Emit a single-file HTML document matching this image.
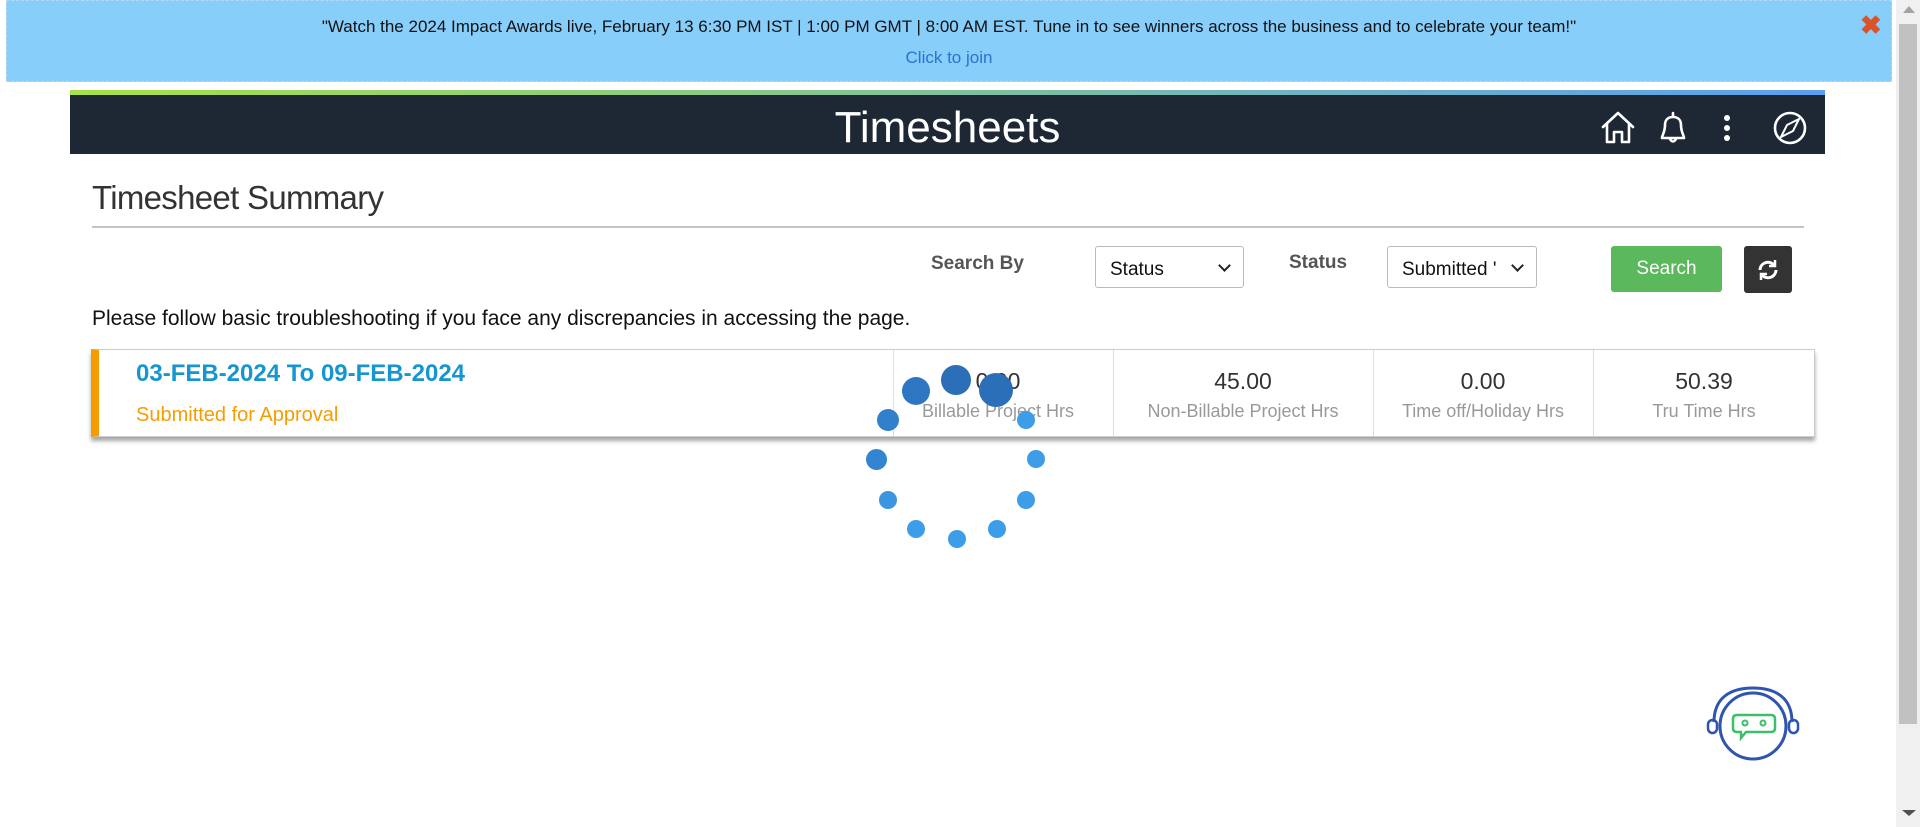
<!DOCTYPE html>
<html><head><meta charset="utf-8"><style>
*{margin:0;padding:0;box-sizing:border-box}
body{width:1920px;height:827px;overflow:hidden;background:#fff;font-family:"Liberation Sans",Arial,sans-serif;position:relative}
.a{position:absolute}
.banner{left:6px;top:0;width:1886px;height:82px;background:#87cefa;border:1px dashed #b9d9f0}
.sel{background:#fff;border:1px solid #bbb;border-radius:3px;font-size:19px;color:#111;padding:12px 0 0 14px;height:42px}
.sel:after{content:"";position:absolute;right:14px;top:14px;width:7px;height:7px;border-right:2px solid #222;border-bottom:2px solid #222;transform:rotate(45deg)}
.val{font-size:23px;color:#333;text-align:center}
.lbl{font-size:18px;color:#999;text-align:center}
.dot{position:absolute;border-radius:50%}
</style></head><body>
<div class="a banner"></div>
<div class="a" style="left:6px;width:1886px;top:17px;text-align:center;font-size:17px;color:#111">"Watch the 2024 Impact Awards live, February 13 6:30 PM IST | 1:00 PM GMT | 8:00 AM EST. Tune in to see winners across the business and to celebrate your team!"</div>
<div class="a" style="left:6px;width:1886px;top:48px;text-align:center;font-size:17px;color:#2a73d0">Click to join</div>
<div class="a" style="left:1860px;top:12px;font-size:26px;font-weight:bold;color:#d9542a;line-height:1">✖</div>
<div class="a" style="left:1896px;top:0;width:24px;height:827px;background:#f0f0f0"></div>
<div class="a" style="left:1899px;top:24px;width:18px;height:700px;background:#c1c1c1"></div>
<div class="a" style="left:1903px;top:6px;border:6px solid transparent;border-bottom:7px solid #a3a3a3;border-top:0"></div>
<div class="a" style="left:1902px;top:810px;border:7px solid transparent;border-top:6px solid #505050;border-bottom:0"></div>

<div class="a" style="left:70px;top:90px;width:1755px;height:5px;background:linear-gradient(90deg,#a8e04a,#5a9ff0)"></div>
<div class="a" style="left:70px;top:95px;width:1755px;height:59px;background:#1e2734"></div>
<div class="a" style="left:70px;width:1755px;top:103px;text-align:center;color:#fff;font-size:44px">Timesheets</div>
<svg class="a" style="left:1600px;top:110px" width="210" height="36" viewBox="0 0 210 36" fill="none" stroke="#fff" stroke-width="2.6" stroke-linejoin="round" stroke-linecap="round">
<path d="M3 17 L18 3 L33 17 M7 14 V32 H14 V22 H22 V32 H29 V14"/>
<path d="M73 3 V6 M62 28 C62 25 65 23 65 15 C65 10 68 7 73 7 C78 7 81 10 81 15 C81 23 84 25 84 28 Z M70 29 Q73 34 76 29"/>
<circle cx="127" cy="8" r="3" fill="#fff" stroke="none"/><circle cx="127" cy="18" r="3" fill="#fff" stroke="none"/><circle cx="127" cy="28" r="3" fill="#fff" stroke="none"/>
<circle cx="190" cy="18" r="15"/><path d="M199 9 L193 21 L181 27 L187 15 Z" stroke-width="2"/>
</svg>

<div class="a" style="left:92px;top:179px;font-size:33px;color:#333;letter-spacing:-.7px">Timesheet Summary</div>
<div class="a" style="left:92px;top:226px;width:1712px;height:2px;background:#c4c4c4"></div>

<div class="a" style="left:931px;top:253px;font-size:19px;font-weight:bold;color:#555">Search By</div>
<div class="a sel" style="left:1095px;top:246px;width:149px">Status</div>
<div class="a" style="left:1289px;top:252px;font-size:19px;font-weight:bold;color:#555">Status</div>
<div class="a sel" style="left:1387px;top:246px;width:150px">Submitted '</div>
<div class="a" style="left:1611px;top:246px;width:111px;height:46px;background:#5cb85c;border-radius:3px;color:#fff;font-size:19px;text-align:center;line-height:46px">Search</div>
<div class="a" style="left:1744px;top:246px;width:48px;height:47px;background:#333;border-radius:3px"></div>
<svg class="a" style="left:1756px;top:258px" width="24" height="24" viewBox="0 0 24 24" fill="none" stroke="#fff" stroke-width="3"><path d="M4 12 A8 8 0 0 1 18 7"/><path d="M20 12 A8 8 0 0 1 6 17"/><path d="M19 2 V8 H13" stroke-width="2.5"/><path d="M5 22 V16 H11" stroke-width="2.5"/></svg>

<div class="a" style="left:92px;top:307px;font-size:21px;color:#111">Please follow basic troubleshooting if you face any discrepancies in accessing the page.</div>

<div class="a" style="left:91px;top:349px;width:1724px;height:88px;background:#fff;border:1px solid #ccc;border-left:8px solid #f59c00;box-shadow:0 4px 4px rgba(0,0,0,.35)"></div>
<div class="a" style="left:136px;top:360px;font-size:24px;font-weight:bold;color:#1596cf">03-FEB-2024 To 09-FEB-2024</div>
<div class="a" style="left:136px;top:404px;font-size:20px;color:#f59c00">Submitted for Approval</div>
<div class="a" style="left:893px;top:350px;width:1px;height:86px;background:#ddd"></div>
<div class="a" style="left:1113px;top:350px;width:1px;height:86px;background:#ddd"></div>
<div class="a" style="left:1373px;top:350px;width:1px;height:86px;background:#ddd"></div>
<div class="a" style="left:1593px;top:350px;width:1px;height:86px;background:#ddd"></div>
<div class="a val" style="left:893px;width:210px;top:368px">0.00</div>
<div class="a lbl" style="left:893px;width:210px;top:401px">Billable Project Hrs</div>
<div class="a val" style="left:1113px;width:260px;top:368px">45.00</div>
<div class="a lbl" style="left:1113px;width:260px;top:401px">Non-Billable Project Hrs</div>
<div class="a val" style="left:1373px;width:220px;top:368px">0.00</div>
<div class="a lbl" style="left:1373px;width:220px;top:401px">Time off/Holiday Hrs</div>
<div class="a val" style="left:1593px;width:222px;top:368px">50.39</div>
<div class="a lbl" style="left:1593px;width:222px;top:401px">Tru Time Hrs</div>

<div class="dot" style="left:941px;top:365px;width:30px;height:30px;background:#2a6fb8"></div>
<div class="dot" style="left:979px;top:373px;width:34px;height:34px;background:#2a6fb8"></div>
<div class="dot" style="left:902px;top:377px;width:28px;height:28px;background:#2d76c2"></div>
<div class="dot" style="left:877px;top:409px;width:22px;height:22px;background:#3280cc"></div>
<div class="dot" style="left:866px;top:449px;width:21px;height:21px;background:#3385d2"></div>
<div class="dot" style="left:879px;top:491px;width:18px;height:18px;background:#3b95e0"></div>
<div class="dot" style="left:907px;top:520px;width:18px;height:18px;background:#3d9de8"></div>
<div class="dot" style="left:948px;top:530px;width:18px;height:18px;background:#3d9de8"></div>
<div class="dot" style="left:988px;top:520px;width:18px;height:18px;background:#3d9de8"></div>
<div class="dot" style="left:1017px;top:491px;width:18px;height:18px;background:#3d9de8"></div>
<div class="dot" style="left:1027px;top:450px;width:18px;height:18px;background:#3d9de8"></div>
<div class="dot" style="left:1017px;top:411px;width:18px;height:18px;background:#3d9de8"></div>

<svg class="a" style="left:1706px;top:686px" width="94" height="76" viewBox="0 0 94 76" fill="none">
<path d="M8 36 C8 12 24 2 47 2 C70 2 86 12 86 36" stroke="#2f55b0" stroke-width="3"/>
<circle cx="47" cy="40" r="33" stroke="#2f55b0" stroke-width="3"/>
<rect x="2" y="34" width="9" height="13" rx="4.5" stroke="#2f55b0" stroke-width="2.5"/>
<rect x="83" y="34" width="9" height="13" rx="4.5" stroke="#2f55b0" stroke-width="2.5"/>
<path d="M31 29 H65 Q69 29 69 33 V42 Q69 46 65 46 H40 L35 52 V46 H31 Q27 46 27 42 V33 Q27 29 31 29 Z" stroke="#3cbf68" stroke-width="2.5"/>
<circle cx="39" cy="37" r="2.5" stroke="#3cbf68" stroke-width="2"/><circle cx="57" cy="37" r="2.5" stroke="#3cbf68" stroke-width="2"/>
</svg>
</body></html>
